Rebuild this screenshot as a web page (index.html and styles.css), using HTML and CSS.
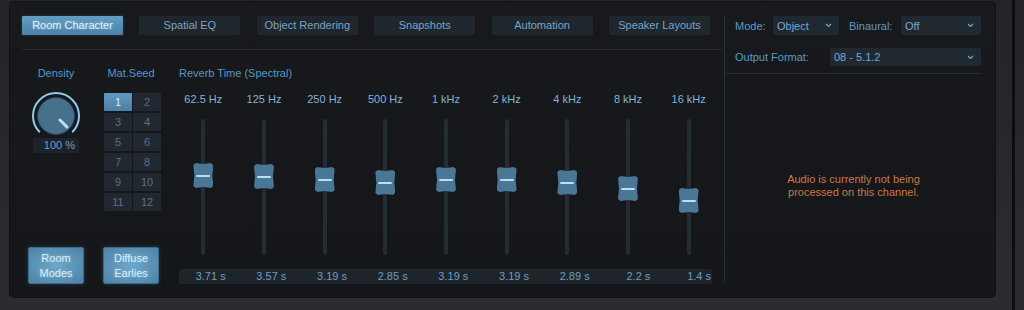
FILE: index.html
```html
<!DOCTYPE html>
<html lang="en">
  <head>
    <meta charset="UTF-8" />
    <meta name="viewport" content="width=device-width, initial-scale=1.0" />
    <title>Room Character</title>
    <link rel="stylesheet" href="styles.css">
  </head>
  <body>
    <div class="frame">
      <div class="panel">
        <div class="main">
          <nav class="tabs">
            <div class="tab active">Room Character</div>
            <div class="tab">Spatial EQ</div>
            <div class="tab">Object Rendering</div>
            <div class="tab">Snapshots</div>
            <div class="tab">Automation</div>
            <div class="tab">Speaker Layouts</div>
          </nav>

          <div class="content">
            <div class="col density">
              <div class="label">Density</div>
              <svg class="knob" width="54" height="45" viewBox="0 0 54 45">
                <path d="M10.74 41.26 A23 23 0 1 1 43.26 41.26" fill="none" stroke="#8ccbea" stroke-width="2" />
                <circle cx="27" cy="25" r="18.5" fill="#47708d" stroke="#2a4658" stroke-width="1" />
                <line x1="31" y1="29" x2="38" y2="36" stroke="#b9e3f6" stroke-width="3" stroke-linecap="round" />
              </svg>
              <div class="readout">100 %</div>
              <div class="push">Room<br>Modes</div>
            </div>

            <div class="col seed">
              <div class="label">Mat.Seed</div>
              <div class="seed-grid">
                <div class="seed-btn on">1</div>
                <div class="seed-btn">2</div>
                <div class="seed-btn">3</div>
                <div class="seed-btn">4</div>
                <div class="seed-btn">5</div>
                <div class="seed-btn">6</div>
                <div class="seed-btn">7</div>
                <div class="seed-btn">8</div>
                <div class="seed-btn">9</div>
                <div class="seed-btn">10</div>
                <div class="seed-btn">11</div>
                <div class="seed-btn">12</div>
              </div>
              <div class="push">Diffuse<br>Earlies</div>
            </div>

            <div class="col reverb">
              <div class="label left">Reverb Time (Spectral)</div>
              <div class="bands freqs">
                <div>62.5 Hz</div>
                <div>125 Hz</div>
                <div>250 Hz</div>
                <div>500 Hz</div>
                <div>1 kHz</div>
                <div>2 kHz</div>
                <div>4 kHz</div>
                <div>8 kHz</div>
                <div>16 kHz</div>
              </div>
              <div class="bands sliders">
                <div class="slider"><div class="track"></div><div class="thumb" style="top: 44px"></div></div>
                <div class="slider"><div class="track"></div><div class="thumb" style="top: 45px"></div></div>
                <div class="slider"><div class="track"></div><div class="thumb" style="top: 48px"></div></div>
                <div class="slider"><div class="track"></div><div class="thumb" style="top: 51px"></div></div>
                <div class="slider"><div class="track"></div><div class="thumb" style="top: 48px"></div></div>
                <div class="slider"><div class="track"></div><div class="thumb" style="top: 48px"></div></div>
                <div class="slider"><div class="track"></div><div class="thumb" style="top: 51px"></div></div>
                <div class="slider"><div class="track"></div><div class="thumb" style="top: 57px"></div></div>
                <div class="slider"><div class="track"></div><div class="thumb" style="top: 69px"></div></div>
              </div>
              <div class="values">
                <div class="bands">
                  <div>3.71 s</div>
                  <div>3.57 s</div>
                  <div>3.19 s</div>
                  <div>2.85 s</div>
                  <div>3.19 s</div>
                  <div>3.19 s</div>
                  <div>2.89 s</div>
                  <div>2.2 s</div>
                  <div>1.4 s</div>
                </div>
              </div>
            </div>
          </div>
        </div>

        <div class="divider"></div>

        <div class="side">
          <div class="side-head">
            <div class="side-row">
              <span class="side-label mode">Mode:</span>
              <div class="select w-mode">Object <svg width="7" height="5" viewBox="0 0 7 5"><path d="M1 1 L3.5 3.5 L6 1" fill="none" stroke="#72a8cf" stroke-width="1.2" /></svg></div>
              <span class="side-label binaural">Binaural:</span>
              <div class="select w-binaural">Off <svg width="7" height="5" viewBox="0 0 7 5"><path d="M1 1 L3.5 3.5 L6 1" fill="none" stroke="#72a8cf" stroke-width="1.2" /></svg></div>
            </div>
            <div class="side-row second">
              <span class="side-label output">Output Format:</span>
              <div class="select w-output">08 - 5.1.2 <svg width="7" height="5" viewBox="0 0 7 5"><path d="M1 1 L3.5 3.5 L6 1" fill="none" stroke="#72a8cf" stroke-width="1.2" /></svg></div>
            </div>
          </div>
          <div class="message">Audio is currently not being<br>processed on this channel.</div>
        </div>
      </div>
      <div class="rail"></div>
    </div>
  </body>
</html>
```

FILE: styles.css
```css
body {
  margin: 0;
  width: 1024px;
  height: 310px;
  overflow: hidden;
  background: #28292c;
  font-family: "Liberation Sans", Arial, sans-serif;
  font-size: 11px;
}

.frame {
  display: flex;
  height: 310px;
  padding: 2px 0 0 10px;
  box-sizing: border-box;
  background: linear-gradient(#232427, #2b2c2f);
}

.panel {
  display: flex;
  width: 985px;
  height: 295px;
  background: linear-gradient(#17191c, #141619);
  border-radius: 4px;
  box-shadow: 0 0 0 1px #101113;
}

.rail {
  width: 3px;
  height: 310px;
  margin: -2px 0 0 17px;
  background: #0c0d0f;
}

/* Left: tabs + room character */
.main {
  display: flex;
  flex-direction: column;
  width: 714px;
  padding: 14px 2px 13px 12px;
  box-sizing: border-box;
}

.tabs {
  display: flex;
  gap: 16.4px;
  padding-bottom: 14px;
  border-bottom: 1px solid #242b33;
}

.tab {
  width: 101px;
  height: 19px;
  line-height: 19px;
  text-align: center;
  background: #20262d;
  color: #7ba4c2;
  border-radius: 1px;
}

.tab.active {
  background: linear-gradient(#629dc3, #4a81a7);
  color: #e0f0fa;
  text-shadow: 0 0 3px rgba(200, 235, 255, 0.5);
  box-shadow: 0 0 3px rgba(90, 150, 195, 0.35);
}

.content {
  display: flex;
  flex: 1;
  padding-top: 17px;
}

.col {
  display: flex;
  flex-direction: column;
}

.label {
  height: 12px;
  line-height: 12px;
  text-align: center;
  color: #5897c5;
}

.label.left {
  text-align: left;
  padding-left: 6px;
}

.density {
  width: 68px;
}

.knob {
  display: block;
  align-self: center;
  margin-top: 12px;
}

.readout {
  align-self: center;
  width: 46px;
  height: 15px;
  line-height: 15px;
  margin-top: 2px;
  padding-right: 4px;
  box-sizing: border-box;
  text-align: right;
  background: #1d232a;
  color: #6d9fc3;
  border-radius: 2px;
}

.push {
  display: flex;
  flex-direction: column;
  justify-content: center;
  align-self: center;
  width: 56px;
  height: 37px;
  margin-top: auto;
  box-sizing: border-box;
  text-align: center;
  line-height: 15px;
  color: #dceefa;
  background: radial-gradient(ellipse at center, #6ea7ca, #4c82a6);
  border: 1px solid #3b6b8b;
  border-radius: 2px;
  box-shadow: 0 0 4px rgba(90, 150, 190, 0.3);
  text-shadow: 0 0 3px rgba(210, 240, 255, 0.4);
}

.seed {
  width: 62px;
  margin-left: 10px;
}

.seed-grid {
  display: grid;
  grid-template-columns: 28px 28px;
  grid-auto-rows: 18px;
  gap: 2px 1px;
  margin: 14px 0 0 4px;
}

.seed-btn {
  line-height: 18px;
  text-align: center;
  background: #21282f;
  color: #557289;
  border-radius: 1px;
}

.seed-btn.on {
  background: linear-gradient(#6099be, #4c80a4);
  color: #e0f0fa;
}

/* Spectral reverb */
.reverb {
  width: 546px;
  margin-left: 11px;
}

.bands {
  display: grid;
  grid-template-columns: repeat(9, 1fr);
  width: 546px;
}

.freqs {
  margin-top: 14px;
  height: 12px;
  line-height: 12px;
  text-align: center;
  color: #80b4d8;
}

.sliders {
  margin-top: 14px;
  height: 136px;
}

.slider {
  position: relative;
  display: flex;
  justify-content: center;
}

.track {
  width: 4px;
  height: 100%;
  background: #252c33;
  border-radius: 2px;
}

.thumb {
  position: absolute;
  left: 50%;
  width: 20px;
  height: 25px;
  transform: translateX(-50%);
  background: #4a7795;
  border-radius: 3px;
  clip-path: polygon(0 7%, 12% 0, 50% 4%, 88% 0, 100% 7%, 95% 50%, 100% 93%, 88% 100%, 50% 96%, 12% 100%, 0 93%, 5% 50%);
}

.thumb::after {
  content: "";
  position: absolute;
  left: 3px;
  right: 3px;
  top: 11.5px;
  height: 2px;
  background: #b6e0f4;
  border-radius: 1px;
}

.values {
  height: 15px;
  margin: 14px 7px 0 6px;
  background: #1d242a;
  border-radius: 2px;
}

.values .bands {
  margin-left: -6px;
  line-height: 15px;
  text-align: right;
  color: #6d9fc3;
}

.values .bands div {
  padding-right: 8px;
}

.divider {
  width: 1px;
  margin: 13px 0 14px;
  background: #24323d;
}

/* Right: output settings */
.side {
  display: flex;
  flex-direction: column;
  flex: 1;
  padding: 14px 13px 0 0;
}

.side-head {
  padding: 0 0 7px 10px;
  border-bottom: 1px solid #242b33;
}

.side-row {
  display: flex;
  align-items: center;
  height: 19px;
}

.side-row.second {
  height: 18px;
  margin-top: 13px;
}

.side-label {
  color: #5d9ac6;
}

.side-label.mode {
  width: 38px;
}

.side-label.binaural {
  width: 52px;
  margin-left: 10px;
}

.side-label.output {
  width: 95px;
}

.select {
  display: flex;
  align-items: center;
  justify-content: space-between;
  height: 100%;
  padding: 0 7px 0 4px;
  box-sizing: border-box;
  background: #212930;
  color: #73a9d0;
  border-radius: 2px;
}

.w-mode {
  width: 66px;
}

.w-binaural {
  width: 80px;
}

.w-output {
  width: 151px;
}

.message {
  display: flex;
  flex: 1;
  align-items: center;
  justify-content: center;
  text-align: center;
  line-height: 13px;
  color: #c67a46;
}
```
